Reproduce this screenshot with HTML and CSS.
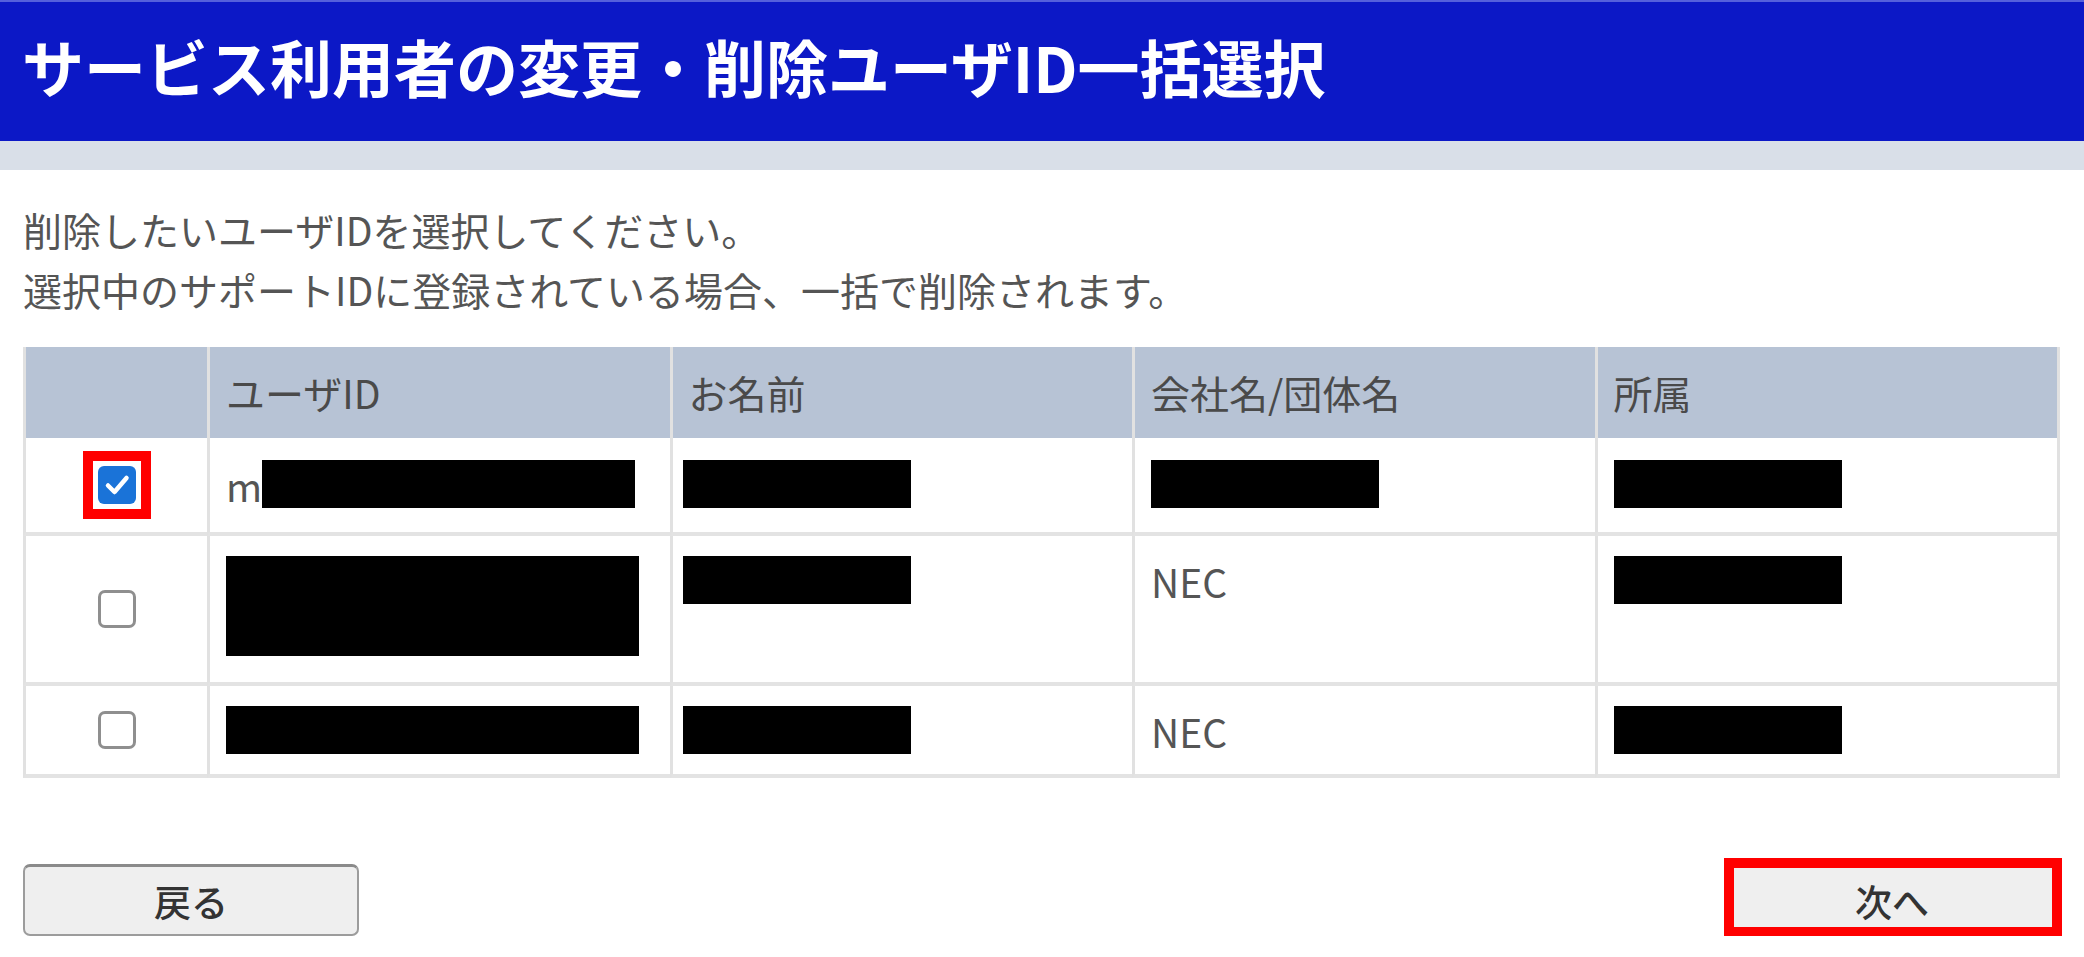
FILE: index.html
```html
<!DOCTYPE html>
<html lang="ja">
<head>
<meta charset="utf-8">
<title>サービス利用者の変更・削除ユーザID一括選択</title>
<link rel="stylesheet" href="styles.css">
</head>
<body>
<header class="title-bar">
  <h1 class="title">サービス利用者の変更・削除ユーザID一括選択</h1>
</header>
<div class="band"></div>
<main class="content">
  <div class="intro">
    <p>削除したいユーザIDを選択してください。</p>
    <p>選択中のサポートIDに登録されている場合、一括で削除されます。</p>
  </div>
  <table class="users">
    <colgroup>
      <col class="c-check">
      <col>
      <col>
      <col>
      <col>
    </colgroup>
    <thead>
      <tr>
        <th></th>
        <th>ユーザID</th>
        <th>お名前</th>
        <th>会社名/団体名</th>
        <th>所属</th>
      </tr>
    </thead>
    <tbody>
      <tr class="r1">
        <td class="check"><span class="mark"><span class="cb on"><svg viewBox="0 0 38 38" width="38" height="38"><path d="M10 19.5 L16.5 26 L28.5 12" fill="none" stroke="#fff" stroke-width="4.5" stroke-linecap="round" stroke-linejoin="round"/></svg></span></span></td>
        <td>m<span class="redact w373"></span></td>
        <td><span class="redact w228 nudge"></span></td>
        <td><span class="redact w228"></span></td>
        <td><span class="redact w228"></span></td>
      </tr>
      <tr class="r2">
        <td class="check"><span class="cb"></span></td>
        <td><span class="redact w413 tall"></span></td>
        <td><span class="redact w228 nudge"></span></td>
        <td>NEC</td>
        <td><span class="redact w228"></span></td>
      </tr>
      <tr class="r3">
        <td class="check"><span class="cb"></span></td>
        <td><span class="redact w413"></span></td>
        <td><span class="redact w228 nudge"></span></td>
        <td>NEC</td>
        <td><span class="redact w228"></span></td>
      </tr>
    </tbody>
  </table>
  <div class="actions">
    <div class="btn-wrap"><button class="btn" type="button">戻る</button></div>
    <div class="btn-wrap"><button class="btn" type="button">次へ</button><span class="highlight"></span></div>
  </div>
</main>
</body>
</html>
```
FILE: styles.css
```css
* { box-sizing: border-box; }

body {
  margin: 0;
  background: #fff;
  color: #555;
  font-family: "Noto Sans CJK JP", "Noto Sans", sans-serif;
}

.title-bar {
  height: 141px;
  background: #0c18c6;
  border-top: 2px solid #5560dc;
  display: flex;
  align-items: center;
  padding: 0 0 12px 22px;
}

.title {
  margin: 0;
  font-size: 62px;
  font-weight: 700;
  line-height: 1;
  color: #fff;
  white-space: nowrap;
}

.band {
  height: 29px;
  background: #d9dfe8;
}

.content {
  padding: 29px 24px 0 23px;
}

.intro p {
  margin: 0;
  font-size: 39px;
  line-height: 60px;
  color: #555;
}

.users {
  margin-top: 28px;
  width: 100%;
  table-layout: fixed;
  border-collapse: separate;
  border-spacing: 0;
  border-right: 3px solid #e1e1e1;
}

.c-check { width: 184px; }

.users th,
.users td {
  border-left: 3px solid #e1e1e1;
  font-size: 39px;
  line-height: 50px;
  text-align: left;
}

.users th {
  background: #b7c3d5;
  color: #4a4a4a;
  font-weight: 400;
  padding: 20px 16px 21px;
}

.users td {
  border-bottom: 4px solid #e3e3e3;
  vertical-align: top;
  padding: 20px 16px 18px;
  color: #555;
}

.users .r1 td { padding-top: 22px; padding-bottom: 22px; }
.users .r2 td { padding-top: 20px; padding-bottom: 26px; }
.users .r3 td { padding-top: 20px; padding-bottom: 18px; }

.users td.check {
  vertical-align: middle;
  text-align: center;
  padding: 0;
  line-height: 0;
}

.cb {
  display: inline-block;
  width: 38px;
  height: 38px;
  border: 3px solid #8f8f8f;
  border-radius: 7px;
  background: #fff;
  vertical-align: middle;
}

.cb.on {
  border: 0;
  background: #1a73d8;
  border-radius: 6px;
}

.cb svg { display: block; }

.mark {
  display: inline-block;
  border: 10px solid #f00;
  padding: 5px;
  line-height: 0;
  vertical-align: middle;
}

.redact {
  display: inline-block;
  vertical-align: top;
  height: 48px;
  background: #000;
}

.redact.tall { height: 100px; }
.redact.nudge { margin-left: -6px; }
.w228 { width: 228px; }
.w373 { width: 373px; }
.w413 { width: 413px; }

.actions {
  display: flex;
  justify-content: space-between;
  margin-top: 86px;
}

.btn-wrap {
  position: relative;
}

.btn {
  display: block;
  width: 336px;
  height: 72px;
  background: #efefef;
  border: 2px solid #9c9c9c;
  border-top: 3px solid #8a8a8a;
  border-radius: 7px;
  font-family: "Noto Sans CJK JP", "Noto Sans", sans-serif;
  font-size: 37px;
  font-weight: 500;
  color: #333;
  padding: 0;
}

.highlight {
  position: absolute;
  top: -6px;
  left: 0;
  right: -2px;
  bottom: -1px;
  border: 10px solid #f00;
  pointer-events: none;
}
```
